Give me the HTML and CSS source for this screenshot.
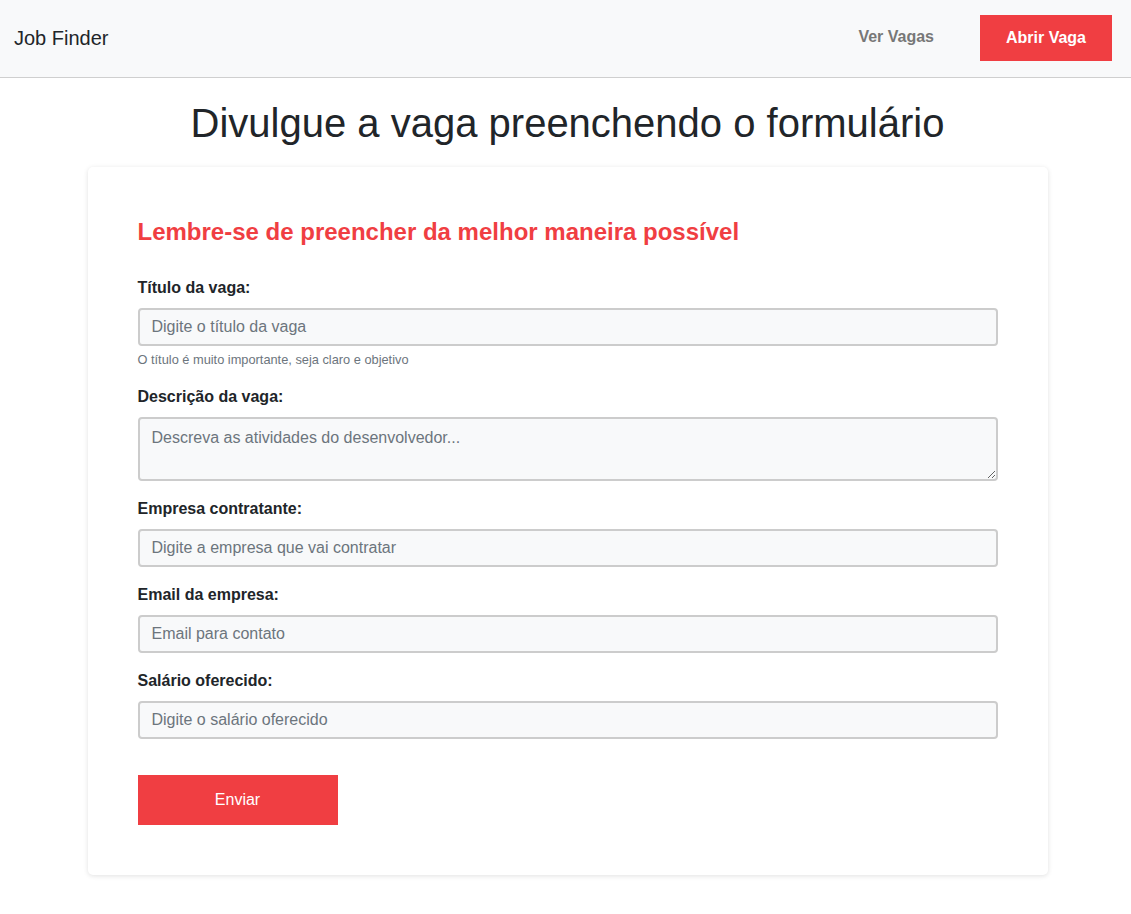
FILE: index.html
```html
<!DOCTYPE html>
<html lang="pt-BR">
<head>
<meta charset="utf-8">
<title>Job Finder</title>
<link rel="stylesheet" href="styles.css">
</head>
<body>
<header class="topbar">
  <a class="brand" href="#">Job Finder</a>
  <nav class="nav">
    <a class="nav-link" href="#">Ver Vagas</a>
    <a class="nav-btn" href="#">Abrir Vaga</a>
  </nav>
</header>
<main class="main">
  <h1 class="page-title">Divulgue a vaga preenchendo o formulário</h1>
  <section class="card">
    <h2 class="card-title">Lembre-se de preencher da melhor maneira possível</h2>
    <form class="form">
      <div class="group">
        <label class="label" for="title">Título da vaga:</label>
        <input class="field" id="title" type="text" placeholder="Digite o título da vaga">
        <small class="help">O título é muito importante, seja claro e objetivo</small>
      </div>
      <div class="group">
        <label class="label" for="desc">Descrição da vaga:</label>
        <textarea class="field area" id="desc" placeholder="Descreva as atividades do desenvolvedor..."></textarea>
      </div>
      <div class="group">
        <label class="label" for="company">Empresa contratante:</label>
        <input class="field" id="company" type="text" placeholder="Digite a empresa que vai contratar">
      </div>
      <div class="group">
        <label class="label" for="email">Email da empresa:</label>
        <input class="field" id="email" type="text" placeholder="Email para contato">
      </div>
      <div class="group">
        <label class="label" for="salary">Salário oferecido:</label>
        <input class="field" id="salary" type="text" placeholder="Digite o salário oferecido">
      </div>
      <button class="submit" type="button">Enviar</button>
    </form>
  </section>
</main>
</body>
</html>
```
FILE: styles.css
```css
* { box-sizing: border-box; }
html, body { margin: 0; padding: 0; }
body {
  font-family: "Liberation Sans", Arial, sans-serif;
  color: #212529;
  background: #fff;
  font-size: 16px;
}
.topbar {
  height: 78px;
  background: #f8f9fa;
  border-bottom: 1px solid #cfcfcf;
  display: flex;
  align-items: center;
  justify-content: space-between;
  padding: 0 19px 0 14px;
}
.brand {
  color: #212529;
  text-decoration: none;
  font-size: 20px;
}
.nav {
  display: flex;
  align-items: center;
  gap: 46px;
}
.nav-link {
  color: #777;
  font-weight: bold;
  text-decoration: none;
  font-size: 16px;
  margin-top: -3px;
  margin-right: 0;
  padding-left: 1px;
}
.nav-btn {
  background: #f03e42;
  color: #fff;
  font-weight: bold;
  text-decoration: none;
  width: 132px;
  height: 46px;
  display: flex;
  align-items: center;
  justify-content: center;
  font-size: 16px;
  margin-top: -2px;
}
.main {
  display: flex;
  flex-direction: column;
  align-items: center;
  padding: 0 0 40px 4px;
}
.page-title {
  font-weight: normal;
  font-size: 40px;
  line-height: 48px;
  margin: 21px 0 20px;
  color: #212529;
}
.card {
  width: 960px;
  background: #fff;
  border-radius: 5px;
  box-shadow: 0 1px 5px rgba(0,0,0,0.12);
  padding: 50px;
}
.card-title {
  color: #f03e42;
  font-size: 24px;
  line-height: 29px;
  font-weight: bold;
  margin: 0 0 30px;
}
.form { display: flex; flex-direction: column; }
.group {
  display: flex;
  flex-direction: column;
  margin-bottom: 16px;
}
.label {
  font-weight: bold;
  font-size: 16px;
  line-height: 24px;
  margin-bottom: 8px;
}
.field {
  width: 860px;
  height: 38px;
  border: 2px solid #ccc;
  border-radius: 4px;
  background: #f8f9fa;
  font-family: "Liberation Sans", Arial, sans-serif;
  font-size: 16px;
  padding: 6px 12px;
  color: #495057;
}
.field::placeholder { color: #6c757d; }
.area {
  height: 64px;
  resize: vertical;
  padding-top: 10px;
}
.help {
  font-size: 12.8px;
  line-height: 1.5;
  margin-top: 4px;
  color: #6c757d;
}
.submit {
  margin-top: 20px;
  width: 200px;
  height: 50px;
  background: #f03e42;
  color: #fff;
  border: none;
  font-family: "Liberation Sans", Arial, sans-serif;
  font-size: 16px;
}
```
